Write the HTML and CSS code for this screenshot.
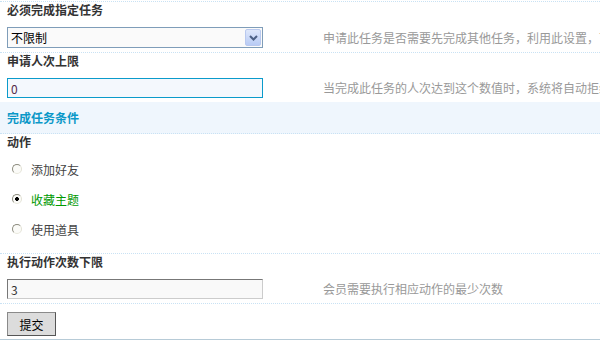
FILE: index.html
```html
<!DOCTYPE html>
<html lang="zh-CN">
<head>
<meta charset="utf-8">
<title>任务设置</title>
<link rel="stylesheet" href="styles.css">
</head>
<body>
<form class="form">
  <div class="item first">
    <div class="label">必须完成指定任务</div>
    <div class="field">
      <div class="control">
        <div class="select-wrap">
          <select class="select"><option>不限制</option></select>
          <span class="select-arrow"><svg width="9" height="6" viewBox="0 0 9 6"><path d="M1 1 L4.5 4.5 L8 1" fill="none" stroke="#4d6185" stroke-width="2"/></svg></span>
        </div>
      </div>
      <div class="tip">申请此任务是否需要先完成其他任务，利用此设置，可以实现任务的连续性</div>
    </div>
  </div>

  <div class="item">
    <div class="label">申请人次上限</div>
    <div class="field">
      <div class="control"><input class="text focus" type="text" value="0"></div>
      <div class="tip">当完成此任务的人次达到这个数值时，系统将自动拒绝新的申请</div>
    </div>
  </div>

  <div class="section">完成任务条件</div>

  <div class="item noborder">
    <div class="label">动作</div>
    <div class="radios">
      <label class="radio"><input type="radio" name="act"><span>添加好友</span></label>
      <label class="radio checked"><input type="radio" name="act" checked><span>收藏主题</span></label>
      <label class="radio"><input type="radio" name="act"><span>使用道具</span></label>
    </div>
  </div>

  <div class="item">
    <div class="label">执行动作次数下限</div>
    <div class="field">
      <div class="control"><input class="text" type="text" value="3"></div>
      <div class="tip">会员需要执行相应动作的最少次数</div>
    </div>
  </div>

  <div class="submit-row">
    <button class="btn" type="button">提交</button>
  </div>
</form>
</body>
</html>
```

FILE: styles.css
```css
html, body {
  margin: 0;
  padding: 0;
  background: #fff;
  overflow: hidden;
}
body {
  width: 600px;
  height: 340px;
  font: 12px "Noto Sans CJK SC", "DejaVu Sans", sans-serif;
  color: #333;
}
.form {
  margin: 1px 0 0;
}
.item {
  border-top: 1px dotted #c9e2f4;
}
.item.noborder {
  border-top: none;
}
.label {
  padding: 0 7px;
  height: 16px;
  line-height: 16px;
  font-weight: bold;
  color: #333;
  white-space: nowrap;
}
.field {
  display: flex;
  align-items: center;
  padding: 9px 0 4px 7px;
}
.control {
  width: 316px;
  flex: none;
}
.tip {
  color: #999;
  white-space: nowrap;
  overflow: hidden;
  flex: 1;
  line-height: 16px;
}
.select-wrap {
  position: relative;
  width: 256px;
  height: 21px;
  box-sizing: border-box;
  border: 1px solid #7f9db9;
  background: #fafafa;
}
.select {
  appearance: none;
  -webkit-appearance: none;
  border: none;
  background: transparent;
  width: 100%;
  height: 19px;
  padding: 0 0 0 3px;
  margin: 0;
  font: 12px "Noto Sans CJK SC", sans-serif;
  color: #000;
  outline: none;
}
.select-arrow {
  position: absolute;
  right: 1px;
  top: 1px;
  width: 16px;
  height: 17px;
  box-sizing: border-box;
  border: 1px solid #b9c9ef;
  border-radius: 2px;
  background: linear-gradient(#dfe8fb, #b8cbf5);
  display: flex;
  align-items: center;
  justify-content: center;
}
.text {
  display: block;
  width: 256px;
  height: 20px;
  box-sizing: border-box;
  margin: 0;
  padding: 0 3px;
  font: 12px "Noto Sans CJK SC", sans-serif;
  color: #333;
  background: #f9f9f9;
  border: 1px solid;
  border-color: #777 #ccc #ccc #777;
  outline: none;
}
.text.focus {
  border: 1px solid #0b9bcb;
  background: #f4f8fd;
  color: #552a4a;
}
.section {
  height: 31px;
  line-height: 31px;
  padding: 0 7px;
  background: #eff6fd;
  border-bottom: 1px dotted #c9e2f4;
  color: #0a98c8;
  font-weight: bold;
}
.radios {
  display: flex;
  flex-direction: column;
  padding: 4px 0 9px;
}
.radio {
  display: flex;
  align-items: center;
  height: 30px;
  padding-left: 12px;
  color: #444;
}
.radio.checked {
  color: #009900;
}
.radio input {
  appearance: none;
  -webkit-appearance: none;
  width: 10px;
  height: 10px;
  margin: 0 9px 0 0;
  box-sizing: border-box;
  border-radius: 50%;
  border: 1px solid;
  border-color: #8d8c7f #e3e2d6 #e8e7dc #8d8c7f;
  background: #fbfbf8;
}
.radio input:checked {
  background: radial-gradient(circle, #000 0, #000 1.6px, #fbfbf8 2.2px);
}
.submit-row {
  border-top: 1px dotted #c9e2f4;
  border-bottom: 1px solid #b7cbd7;
  padding: 8px 0 3px 7px;
}
.btn {
  display: block;
  width: 49px;
  height: 24px;
  margin: 0;
  padding: 0;
  box-sizing: border-box;
  background: #dcdcdc;
  border: 1px solid;
  border-color: #8a8a8a #555 #555 #8a8a8a;
  font: 12px "Noto Sans CJK SC", sans-serif;
  color: #000;
}
```
